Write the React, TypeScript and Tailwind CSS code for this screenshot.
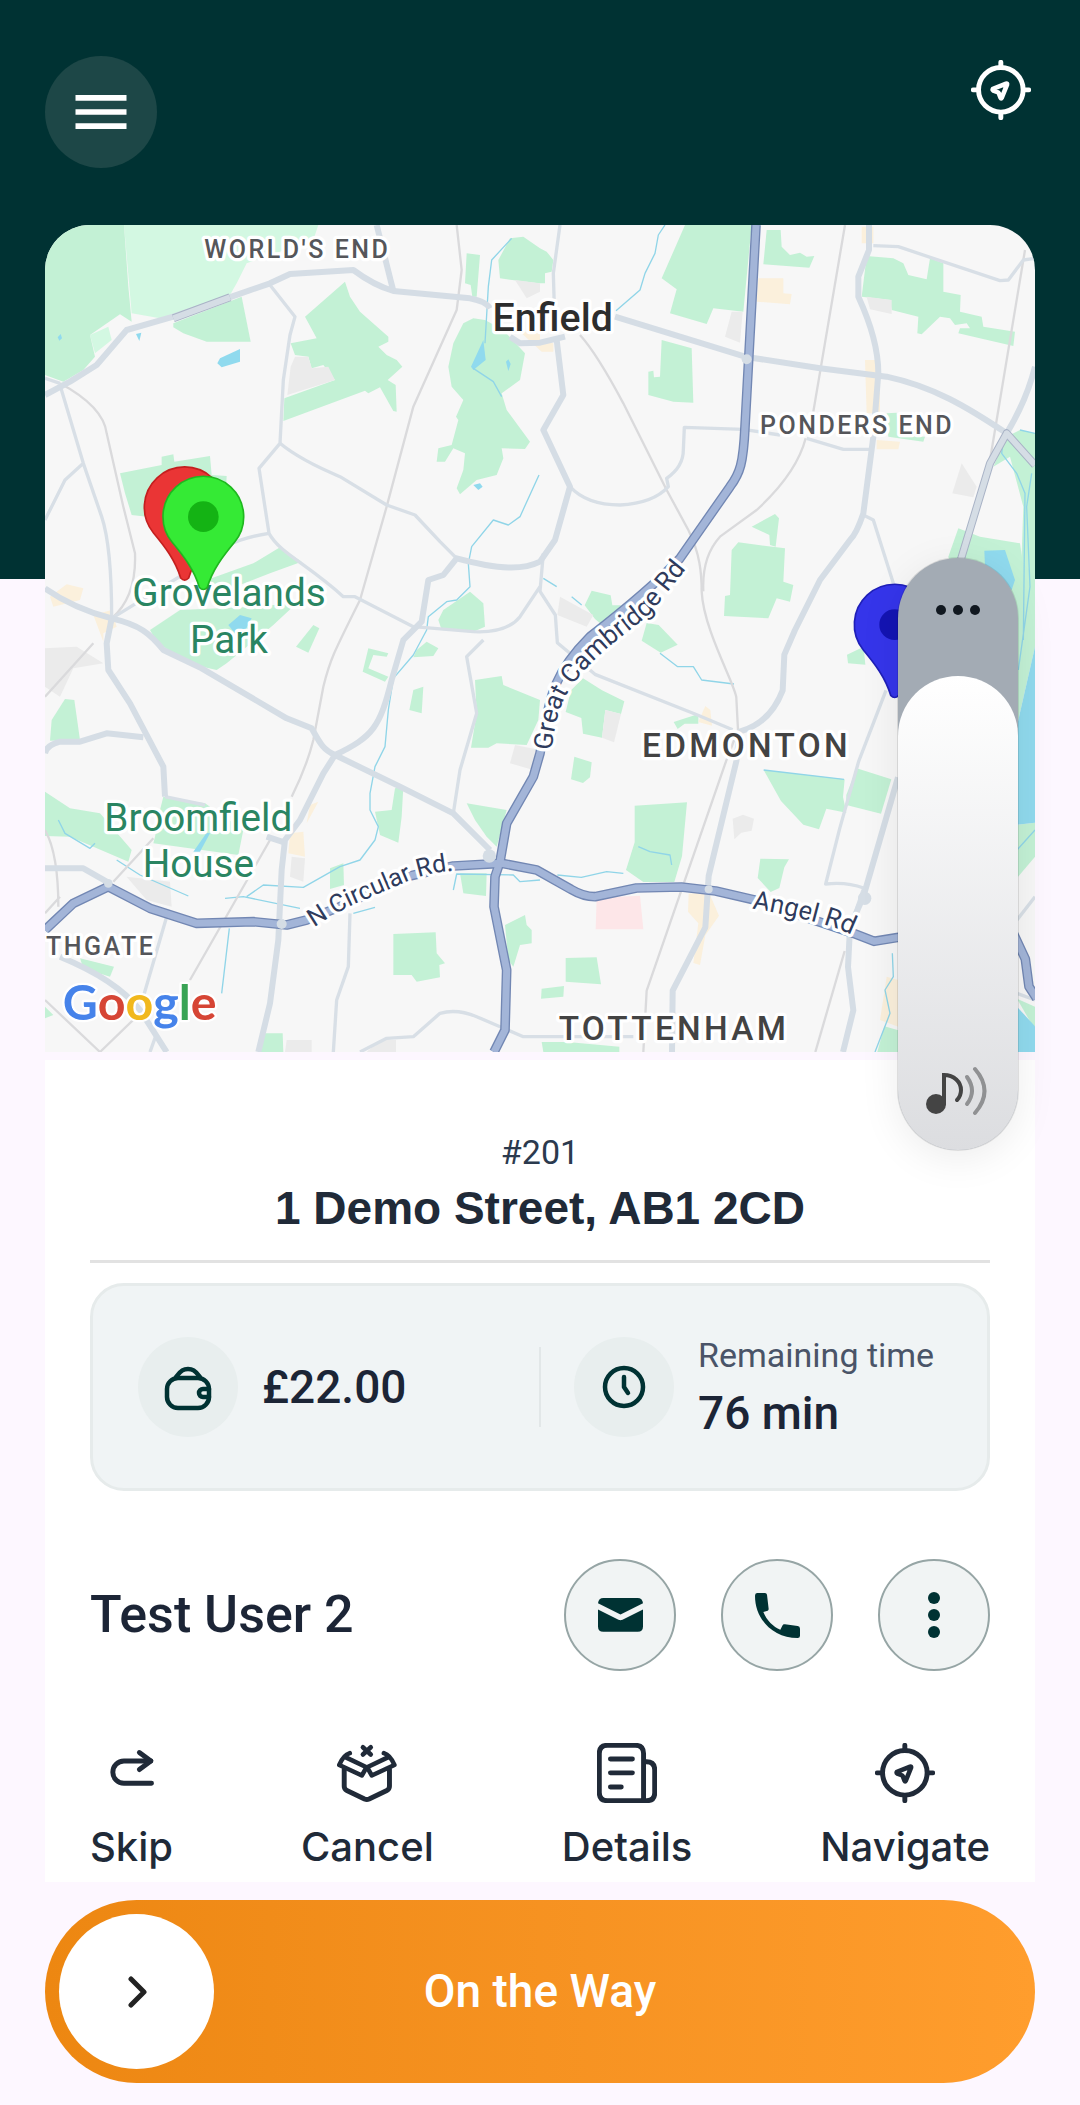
import { useState } from 'react'
import type { ReactNode } from 'react'
import { MdMenu } from 'react-icons/md'

const PARKS = [
  'M15 15H252L265 200 275 305 240 283 150 345 165 410 130 450 70 485 15 465Z',
  'M400 310L605 230 632 365 500 365 430 340 400 322Z',
  'M915 185L930 230 960 275 1045 350 1045 365 1015 380 1040 405 1070 420 1087 440 1043 480 1067 495 1070 575 1060 573 1020 502 985 520 975 512 730 603 733 535 885 480 850 435 815 445 805 410 765 405 752 370 830 355 795 290Z',
  'M1300 295L1335 300 1390 330 1455 400 1440 480 1385 520 1400 570 1470 665 1455 687 1385 685 1390 715 1370 765 1310 780 1260 823 1250 805 1270 750 1275 700 1240 685 1215 725 1190 725 1195 685 1235 675 1255 600 1248 590 1270 540 1235 500 1225 440 1240 370 1270 310Z',
  'M1280 100L1320 105 1310 230 1297 230 1292 195 1275 190Z',
  'M1375 120L1410 55 1450 50 1500 85 1520 95 1540 120 1535 155 1515 160 1515 190 1495 190 1380 175Z',
  'M1935 15H2135L2110 275 2020 265 2000 312 1890 280 1910 208 1865 175Z',
  'M2180 30H2222L2225 80 2250 105 2280 98 2300 110 2323 108 2308 143 2170 133Z',
  'M2480 108L2560 115 2590 130 2605 165 2660 178 2670 115 2710 130 2710 215 2762 225 2760 275 2825 290 2830 320 2925 335 2920 378 2800 350 2755 340 2760 325 2790 325 2780 310 2745 315 2730 295 2700 290 2645 343 2632 340 2635 290 2555 270 2550 240 2465 230Z',
  'M1865 360L1955 385 1960 548 1900 545 1825 525 1825 455 1840 452 1842 472 1860 470Z',
  'M2205 882L2217 895 2207 980 2190 975 2188 945 2135 920Z',
  'M2095 967L2235 985 2230 1085 2260 1095 2250 1145 2210 1135 2185 1195 2052 1188 2055 1128 2070 1125 2075 990Z',
  'M2540 580L2570 578 2575 645 2655 650 2650 665 2545 650Z',
  'M2755 925L2820 950 2940 970 2985 1280 2931 1517 2800 1260 2725 1010Z',
  'M2860 740L2900 650 2940 630 2985 640V1280H2935L2950 860 2910 710Z',
  'M1634 1156L1655 1112 1712 1126 1717 1156 1743 1156 1732 1185 1701 1227 1665 1197Z',
  'M1820 1209L1856 1215 1913 1274 1862 1298 1805 1262Z',
  'M1629 1375L1686 1411 1753 1444 1743 1482 1696 1470 1686 1553 1629 1541 1624 1494 1577 1476 1593 1411Z',
  'M1603 1610L1655 1627 1650 1672 1629 1689 1593 1678Z',
  'M1784 1757L1941 1747 1926 1909 1903 1986 1810 1986 1758 1950 1784 1867Z',
  'M2171 1650L2414 1678 2409 1731 2419 1778 2359 1766 2337 1828 2290 1814 2223 1743Z',
  'M2450 1645L2554 1678 2523 1781 2419 1755 2419 1725Z',
  'M2161 1916L2247 1918 2233 1942 2218 2004 2192 2016 2153 1974Z',
  'M1577 2214L1670 2212 1683 2293 1577 2285Z',
  'M1505 2306L1572 2298 1570 2330 1503 2336Z',
  'M1505 2466H1583L1738 2480V2496H1510Z',
  'M1901 1506L1975 1482V1511H1934L1913 1527Z',
  'M2421 1304L2471 1280 2476 1334 2424 1330Z',
  'M2533 2419L2575 2431V2496H2512Z',
  'M2931 1814L2985 1808V1910L2931 1974Z',
  'M2931 2336L2985 2360V2430Z',
  'M240 760L365 735V710L400 703 403 725 510 708 515 765 560 768 555 880 320 890 275 885 255 820Z',
  'M500 1080L640 1030 720 982 785 1025 690 1060 560 1110Z',
  'M330 1230L420 1170 640 1160 770 1150 700 1215 560 1330 530 1350 440 1330 350 1265Z',
  'M820 1215L838 1225 805 1298 768 1280Z',
  'M1195 1200L1210 1170 1290 1115 1330 1150 1335 1220 1300 1235 1205 1230Z',
  'M985 1285L1045 1300 1040 1310 1000 1305 985 1345 1045 1370 1035 1385 968 1355Z',
  'M1130 1290L1160 1265 1195 1285 1180 1308 1120 1312Z',
  'M1120 1410L1150 1400 1145 1480 1108 1470Z',
  'M1305 1380L1385 1368 1390 1395 1500 1440 1495 1500 1460 1575 1370 1570 1345 1583 1293 1583 1310 1480Z',
  'M75 1437L103 1440 120 1560 30 1562 35 1500Z',
  'M15 1715L90 1765 180 1780 275 1890 265 1925 90 1850 15 1848Z',
  'M370 1730L495 1750 610 1830 595 1905 340 1870 345 1850 360 1770Z',
  'M1280 1750L1400 1770 1370 1880 1340 1850 1305 1800Z',
  'M1065 1705L1090 1700 1085 1790 1075 1868 1020 1845 1005 1775 1055 1770Z',
  'M870 1945L910 1930 912 1995 870 2007Z',
  'M1260 1960H1340L1338 2028 1270 2020Z',
  'M1060 2142L1187 2137 1190 2200 1215 2230 1198 2235 1200 2272 1130 2285 1115 2265 1060 2265Z',
  'M1395 2115L1455 2085 1460 2115 1475 2130 1475 2170 1440 2175 1420 2240 1405 2220Z',
  'M665 2440H728L730 2496H655Z',
  'M120 2215L222 2240 210 2270 130 2245Z',
  'M15 2360L40 2385 15 2395Z',
]

const LIGHT_PARKS = ['M252 15H835L820 60 620 130 590 190 570 225 390 300 275 280Z', 'M150 345L205 320 215 360 165 400Z']

const BLOCKS = [
  'M765 410H805L815 445 865 440 885 480 742 525 752 440Z',
  'M1425 180L1500 190V215L1460 235Z',
  'M2075 275L2108 275 2100 368 2055 350Z',
  'M2480 230L2555 240 2555 282 2490 268Z',
  'M2765 730L2810 800 2800 832 2737 820Z',
  'M1560 1130L1660 1185 1640 1220 1552 1185Z',
  'M1696 1470L1743 1482 1722 1567 1686 1553Z',
  'M2078 1796L2109 1784 2142 1796 2135 1832 2104 1838 2083 1858Z',
  'M15 1285L110 1280 190 1330 100 1345 60 1430 15 1400Z',
  'M260 1970L390 1985 395 2060 320 2040Z',
  'M1425 1575L1500 1590 1480 1650 1410 1630Z',
  'M755 1910L795 1915 790 1985 750 1970Z',
  'M740 2460H815V2496H735Z',
  'M1020 2460H1068V2496H980Z',
]

const SHOPS = [
  'M2155 175H2230V220L2255 222 2250 253 2150 245Z',
  'M2465 20H2500V70H2465Z',
  'M2475 420H2520V580H2480Z',
  'M2510 660L2580 665 2575 688H2510Z',
  'M1440 335H1500V360L1540 370V395H1505Z',
  'M1946 2021L2006 2015 2037 2087 1996 2146 1980 2235 1960 2229 1975 2110 1944 2075Z',
  'M1996 1458L2011 1470 2016 1517 1975 1506Z',
  'M750 1840L790 1835 795 1910 745 1900Z',
  'M810 1755L835 1745 800 1810Z',
  'M30 1130L80 1093 130 1105 120 1140 40 1160Z',
  'M160 1185L215 1170 230 1220 190 1240 190 1265Z',
  'M2540 2270L2575 2280V2420L2520 2400Z',
]

const WATER = [
  'M540 415L600 387V425L545 442 532 430Z',
  'M288 342L304 338 298 363Z',
  'M53 352L62 342 66 355 58 362Z',
  'M1330 360L1337 420 1300 450 1293 440Z',
  'M1398 425L1405 418 1412 432 1405 453Z',
  'M1300 795L1320 790 1328 800 1315 810Z',
  'M565 1215L600 1185 635 1195 600 1260Z',
  'M500 1838L510 1840 480 1895 460 1895Z',
  'M2985 1280V1808L2931 1814V1517Z',
  'M2931 2360L2985 2419V2496H2931Z',
  'M2833 992L2895 990 2925 1080 2915 1110 2870 1060 2835 1040Z',
]

const STREAMS = [
  'M1415 55L1355 120 1345 200 1335 370M1300 445L1360 485 1385 530',
  'M1875 15L1855 45 1845 100 1815 160 1800 210 1728 272',
  'M1497 765L1440 890 1405 915 1360 900 1295 980 1285 1030 1290 1100 1250 1140 1220 1145 1165 1190 1160 1230 1120 1305 1060 1375 1045 1470 1035 1580 1005 1640 990 1720V1770L1015 1820 1005 1860 960 1920 900 1940 790 2002 670 1995 620 2030',
  'M55 1800L75 1840 150 1885 165 1870M230 1920L300 1965 445 2028',
  'M555 2035L610 2030 780 2065M568 2125L545 2320M940 2080L1005 2062',
  'M1240 2010L1250 1962 1420 1965 1440 1985 1500 1980',
  'M1510 1075L1550 1100M1595 1130L1625 1155M1860 1300L1913 1340 1960 1340 1985 1380 2082 1392',
  'M1552 1965L1624 1972 1700 1955 1750 1960M1795 1880L1830 1895 1890 1905 1895 1935',
  'M2171 1650L2412 1678',
  'M2940 630L2985 640M2890 660L2885 700 2930 760 2955 820 2950 1260M2975 760L2960 860 2970 1100 2935 1350',
  'M2985 1830L2931 1890M2557 2200L2560 2270 2535 2310 2550 2380 2505 2496',
]

const RAILS = [
  'M60 490Q190 560 200 640L250 860 285 1000Q290 1130 215 1195',
  'M1250 15L1265 150 1250 270 1120 560 1040 860 960 1140C880 1300 870 1320 850 1400L820 1560Q800 1640 755 1730M690 1860L450 2280',
  'M1620 345Q1670 400 1750 550L1880 810 1945 930C1980 1000 1985 1060 1985 1114 1990 1230 2089 1400 2089 1434L2094 1530 2058 1624 1820 2312 1810 2496',
  'M2415 15L2320 575M2297 655Q2270 760 2150 870L2040 950Q1985 1010 1990 1114',
  'M2955 90L2850 720',
  'M2414 2193L2326 2496',
  'M15 1430L160 1270M15 1830Q55 1900 55 2060M15 2080L60 2030M220 1985L340 1855M15 2340L180 2496 300 2380',
]

const MINOR_ROADS = [
  'M60 495L130 730 185 890Q215 980 215 1195M15 900L75 780 130 730M15 475L60 490',
  'M690 195L765 290 750 345 730 480 720 670 657 745 687 940C720 1000 800 1030 910 1130L945 1130 1120 1220 1300 1235Q1400 1240 1440 1190L1500 1100',
  'M720 670Q780 720 900 770L1040 855 1125 885 1200 965 1250 1015',
  'M687 940Q560 960 500 1020L215 1195',
  'M1560 15L1540 160 1545 330',
  'M1590 800Q1640 855 1740 855 1840 850 1885 800L1880 775Q1930 740 1930 690L1933 622 2110 628 2220 645M2300 655L2410 688H2495',
  'M2500 77L2575 80 2880 182 2905 180 2950 120 2985 115',
  'M2470 885L2500 900 2560 1090M2538 1411L2456 1624 2399 1826 2357 1992Q2420 1985 2471 2004L2430 2122',
  'M1510 1000L1500 1114 1546 1185 1552 1268 1665 1363 1965 1482 2078 1529',
  'M1330 1260L1280 1310 1310 1480 1260 1650 1240 1780',
  'M960 2496L1040 2455 1120 2450 1200 2380Q1250 2365 1310 2390L1450 2450H1780',
  'M930 2080L925 2240 890 2340 880 2496',
  'M380 2090L310 2330M350 2440L330 2496M375 1730L495 1755',
  'M2985 2030L2931 2100M2931 2320L2985 2340',
]

const ROADS = [
  'M15 525L90 485 170 435 260 330 400 290 560 235 690 190 750 162 940 150Q1000 195 1060 213L1290 235Q1340 245 1350 265M1410 350L1440 370 1500 368 1575 350',
  'M1010 15L1060 213',
  'M1725 290L2115 410 2340 445 2540 470C2680 500 2780 560 2900 640',
  'M2487 15V90L2455 170V230Q2515 360 2515 460L2500 650 2470 880Q2450 940 2430 960L2340 1080 2265 1230 2233 1304 2228 1411Q2190 1510 2099 1535L2089 1624 2006 1968 1996 2122 1898 2312 1896 2496',
  'M1550 360L1570 525 1510 630 1590 800 1545 960 1500 1025C1450 1050 1380 1050 1250 1015L1210 1065 1165 1080 1145 1205 1090 1260 1055 1380C1020 1520 1000 1550 885 1605L850 1660 780 1800 735 1860 725 1950 715 2160 690 2350 655 2496',
  'M15 1105Q100 1165 215 1195C300 1215 330 1240 370 1290L485 1345 740 1495 815 1525C840 1570 850 1590 885 1605L1080 1700 1240 1780 1350 1890',
  'M215 1195L200 1270 205 1350 270 1450 370 1640 375 1730',
  'M15 1600Q20 1575 60 1565L120 1565 200 1540 310 1552M15 1945H130L200 1985M680 1850L735 1868',
  'M60 2210Q230 2280 300 2370L380 2496',
  'M2985 440Q2960 540 2900 640M2574 1672L2471 2027 2430 2122 2424 2241 2440 2371 2409 2496',
]

const CASED_ROADS = ['M2985 735L2900 640 2850 730 2750 1060', 'M400 295L570 232']

const HIGHWAYS = [
  'M2148 15L2115 620C2110 730 2100 760 2070 800L1920 1015Q1830 1110 1650 1250C1530 1370 1530 1440 1500 1600L1480 1670 1400 1810 1380 1925 1365 1970 1362 2060 1400 2250 1395 2430 1362 2496',
  'M15 2130L100 2050 205 2000 330 2065 470 2110 640 2105 740 2115 800 2100 900 2060 1100 1970 1240 1938 1385 1930 1490 1950 1593 2008Q1630 2030 1665 2030L1789 2004 1924 2001 2027 2013 2140 2039 2440 2140 2502 2164 2576 2152',
  'M2920 2140L2956 2217 2967 2300 2990 2335',
]

const PIN_SHAPE = 'M-12 212C-28 158-60 117-94 76A121 121 0 1 1 94 76C60 117 28 158 12 212Q0 225-12 212Z'

function Pin({ x, y, fill, edge, dot }: { x: number; y: number; fill: string; edge: string; dot: string }) {
  return (
    <g transform={`translate(${x} ${y})`}>
      <path d={PIN_SHAPE} fill={fill} stroke={edge} strokeWidth={5} />
      <circle r={46} fill={dot} />
    </g>
  )
}

function LayerPaths({ paths, stroke, width }: { paths: string[]; stroke: string; width: number }) {
  return (
    <g fill="none" stroke={stroke} strokeWidth={width} strokeLinejoin="round">
      {paths.map((d) => <path key={d} d={d} />)}
    </g>
  )
}

function AreaPaths({ paths, fill }: { paths: string[]; fill: string }) {
  return (
    <g fill={fill}>
      {paths.map((d) => <path key={d} d={d} />)}
    </g>
  )
}

function RouteMap() {
  return (
    <svg viewBox="15 15 2970 2481" className="block w-full rounded-t-[45px] font-['Roboto',sans-serif]" role="img" aria-label="Route map">
      <rect x={15} y={15} width={2970} height={2481} fill="#f7f7f7" />
      <AreaPaths paths={LIGHT_PARKS} fill="#d3f8e2" />
      <AreaPaths paths={PARKS} fill="#c3f1d5" />
      <AreaPaths paths={BLOCKS} fill="#ebebeb" />
      <AreaPaths paths={SHOPS} fill="#fbf0dc" />
      <path d="M1670 2033L1800 2027 1810 2128H1667Z" fill="#fde6e8" />
      <AreaPaths paths={WATER} fill="#90daee" />
      <LayerPaths paths={STREAMS} stroke="#90d5e8" width={4} />
      <LayerPaths paths={RAILS} stroke="#dadadc" width={7} />
      <LayerPaths paths={MINOR_ROADS} stroke="#d8dfe6" width={10} />
      <LayerPaths paths={ROADS} stroke="#d5dde5" width={18} />
      <LayerPaths paths={CASED_ROADS} stroke="#a9b3c6" width={24} />
      <LayerPaths paths={CASED_ROADS} stroke="#d5dde5" width={18} />
      <LayerPaths paths={HIGHWAYS} stroke="#7287b3" width={29} />
      <LayerPaths paths={HIGHWAYS} stroke="#a3b5d8" width={21} />
      <g fill="#d5dde5">
        <circle cx={2120} cy={418} r={15} />
        <circle cx={205} cy={1990} r={13} />
        <circle cx={725} cy={2112} r={15} />
        <circle cx={2006} cy={2008} r={12} />
        <circle cx={1348} cy={1908} r={20} />
        <circle cx={2474} cy={2035} r={20} />
      </g>

      <defs>
        <path id="great-cambridge" d="M1536 1592Q1545 1460 1605 1385T1758 1239 1851 1156L1960 1020" />
        <path id="n-circular" d="M822 2122Q900 2070 960 2045T1100 1985 1290 1950" />
        <path id="angel" d="M2136 2066Q2230 2080 2340 2110T2470 2175" />
      </defs>
      <g stroke="#fff" strokeWidth={20} strokeLinejoin="round" className="[paint-order:stroke]">
        <g fill="#2f3b5c" fontSize={78}>
          <text><textPath href="#great-cambridge">Great Cambridge Rd</textPath></text>
          <text fontSize={75}><textPath href="#n-circular">N Circular Rd.</textPath></text>
          <text><textPath href="#angel">Angel Rd</textPath></text>
        </g>
        <g fill="#55565a" fontSize={75} className="font-medium tracking-widest">
          <text x={493} y={114}>WORLD'S END</text>
          <text x={2160} y={642}>PONDERS END</text>
          <text x={18} y={2205}>THGATE</text>
        </g>
        <g fill="#434343" fontSize={100} className="font-medium tracking-widest">
          <text x={1806} y={1612}>EDMONTON</text>
          <text x={1556} y={2460}>TOTTENHAM</text>
        </g>
        <text x={1538} y={332} fill="#2d2d2d" fontSize={118} textAnchor="middle" className="font-medium">Enfield</text>
        <g fill="#2a8562" fontSize={116} textAnchor="middle">
          <text x={475} y={1832}>Broomfield</text>
          <text x={475} y={1972}>House</text>
          <text x={567} y={1158}>Grovelands</text>
          <text x={567} y={1298}>Park</text>
        </g>
      </g>

      <Pin x={434} y={862} fill="#ea3535" edge="#c41f1f" dot="#b31414" />
      <Pin x={490} y={890} fill="#35ea35" edge="#1fb81f" dot="#14b314" />
      <Pin x={2564} y={1214} fill="#3535ea" edge="#1f1fb8" dot="#1414b3" />

      <text x={68} y={2399} fontSize={145} stroke="#fff" strokeWidth={14} strokeLinejoin="round" className="font-['Lato',sans-serif] font-bold [paint-order:stroke]">
        <tspan fill="#4683ea">G</tspan>
        <tspan fill="#d64535">o</tspan>
        <tspan fill="#f1b81d">o</tspan>
        <tspan fill="#4683ea">g</tspan>
        <tspan fill="#3aa456">l</tspan>
        <tspan fill="#d64535">e</tspan>
      </text>
    </svg>
  )
}

function LineIcon({ children }: { children: ReactNode }) {
  return (
    <svg viewBox="0 0 183 183" fill="none" stroke="currentColor" strokeWidth={15} strokeLinecap="round" strokeLinejoin="round" className="size-15" aria-hidden="true">
      {children}
    </svg>
  )
}

function NavigateIcon() {
  return (
    <LineIcon>
      <circle cx={91} cy={91} r={68} />
      <path d="M91 7V22M91 160V176M7 91H22M160 91H176" />
      <path strokeWidth={14} d="M67 88Q65 91 68 93L81 98Q84 99 85 102L90 115Q92 119 94 115L110 75Q111 71 107 72Z" />
    </LineIcon>
  )
}

function SkipIcon() {
  return (
    <LineIcon>
      <path d="M149 55H67A34 34 0 0 0 67 123H151" />
      <path d="M114 29L149 55 114 81" />
    </LineIcon>
  )
}

function CancelIcon() {
  return (
    <LineIcon>
      <path strokeWidth={14} d="M79 13L103 35M103 13L79 35" />
      <path d="M22 80V132Q22 141 30 145L84 171Q91 174 98 171L152 145Q160 141 160 132V80" />
      <path strokeWidth={14} d="M39 31C23 36 14 50 7 67L76 99 90 74 27 44" />
      <path strokeWidth={14} d="M143 31C159 36 168 50 175 67L106 99 92 74 155 44" />
    </LineIcon>
  )
}

function DetailsIcon() {
  return (
    <LineIcon>
      <path d="M142 176V32Q142 7 117 7H32Q7 7 7 32V151Q7 176 32 176H152Q176 176 176 152V82Q176 57 151 57H144" />
      <path d="M41 49H108M41 91H108M41 134H74" />
    </LineIcon>
  )
}

const actions = [
  { label: 'Skip', icon: <SkipIcon /> },
  { label: 'Cancel', icon: <CancelIcon /> },
  { label: 'Details', icon: <DetailsIcon /> },
  { label: 'Navigate', icon: <NavigateIcon /> },
]

function RoundButton({ label, children }: { label: string; children: ReactNode }) {
  return (
    <button aria-label={label} className="flex size-28 items-center justify-center rounded-full border-2 border-[#96a5a5] bg-[#f1f4f4] text-[#003233]">
      {children}
    </button>
  )
}

function VolumePanel() {
  const [volume, setVolume] = useState(80)

  return (
    <div className="absolute top-[558px] right-[62px] flex h-[592px] w-30 flex-col overflow-hidden rounded-full bg-[#a3abb4] shadow-[0_8px_40px_rgba(0,0,0,0.08)] ring-1 ring-black/10">
      <button aria-label="More sound settings" className="flex h-[118px] items-center justify-center gap-[7px] pb-[14px]">
        <span className="size-[10px] rounded-full bg-[#111820]" />
        <span className="size-[10px] rounded-full bg-[#111820]" />
        <span className="size-[10px] rounded-full bg-[#111820]" />
      </button>
      <div className="relative flex flex-1 items-end justify-center rounded-t-full bg-gradient-to-b from-white to-[#dcdde0] pb-8">
        <input
          type="range"
          aria-label="Media volume"
          value={volume}
          onChange={(e) => setVolume(Number(e.target.value))}
          className="absolute inset-0 h-full w-full opacity-0"
        />
        <svg viewBox="0 0 64 52" fill="none" strokeWidth={4} strokeLinecap="round" className="h-13 w-16" aria-hidden="true">
          <circle cx={10} cy={38} r={10} fill="#444" />
          <path d="M18 38V9C28 9 35 16 35 24Q35 30 31 34" stroke="#444" />
          <path d="M41 11Q51 25 41 38" stroke="#909193" />
          <path d="M49 3Q68 25 49 47" stroke="#909193" />
        </svg>
      </div>
    </div>
  )
}

export default function App() {
  return (
    <div className="relative min-h-screen bg-[linear-gradient(#003233_579px,#fdf7ff_579px)] px-[45px] pb-5 font-['Roboto',sans-serif] text-[#1c2536]">
      {/* Top bar */}
      <header className="flex items-start justify-between pt-14 pb-[57px] text-white">
        <button aria-label="Open menu" className="flex size-28 items-center justify-center rounded-full bg-[#1d4747]">
          <MdMenu size={68} />
        </button>
        <button aria-label="Navigate" className="p-1">
          <NavigateIcon />
        </button>
      </header>

      <RouteMap />

      {/* Job details */}
      <main className="mt-2 bg-white px-[45px] pt-18 pb-[11px]">
        <p className="text-center text-[34px] leading-10 text-[#2b3a4e]">#201</p>
        <h1 className="mt-2 text-center font-['Liberation_Sans',sans-serif] text-[46px] leading-14 font-bold text-[#202a38]">
          1 Demo Street, AB1 2CD
        </h1>
        <hr className="mt-6 border-t-3 border-[#e2e2e2]" />

        <section className="mt-5 grid h-52 grid-cols-[1fr_auto_1fr] items-center rounded-[34px] border-3 border-[#e6ebeb] bg-[#f0f4f5] px-[45px]">
          <div className="flex items-center gap-6">
            <span className="flex size-25 items-center justify-center rounded-full bg-[#e8eeee] text-[#003233]">
              <svg viewBox="0 0 48 54" fill="none" stroke="currentColor" strokeWidth={4.5} strokeLinecap="round" strokeLinejoin="round" className="w-12" aria-hidden="true">
                <rect x={3} y={18} width={42} height={30} rx={11} />
                <path d="M12 17C17 10 20 9 24 9S31 10 36 17" />
                <path d="M45 29H39A4 4 0 0 0 39 37H45" />
              </svg>
            </span>
            <span className="text-[46px] leading-14 font-medium">£22.00</span>
          </div>
          <div className="h-20 w-[2px] bg-[#e2e7e8]" />
          <div className="flex items-center gap-6 pl-[33px]">
            <span className="flex size-25 shrink-0 items-center justify-center rounded-full bg-[#e8eeee] text-[#003233]">
              <svg viewBox="0 0 44 44" fill="none" stroke="currentColor" strokeWidth={4.5} strokeLinecap="round" strokeLinejoin="round" className="w-11" aria-hidden="true">
                <circle cx={22} cy={22} r={19} />
                <path d="M22 12V22L26 28" />
              </svg>
            </span>
            <div className="whitespace-nowrap">
              <p className="text-[34px] leading-11 text-[#4a5468]">Remaining time</p>
              <p className="mt-2 text-[46px] leading-14 font-medium">76 min</p>
            </div>
          </div>
        </section>

        <section className="mt-17 flex items-center justify-between">
          <h2 className="text-[52px] leading-16 font-medium">Test User 2</h2>
          <div className="flex gap-[45px]">
            <RoundButton label="Message">
              <svg viewBox="0 0 136 102" fill="currentColor" className="w-[45px]" aria-hidden="true">
                <path d="M0 16Q2 0 16 0H120Q134 0 136 16L68 50Z" />
                <path d="M0 35L62 66Q68 69 74 66L136 35V86Q136 102 120 102H16Q0 102 0 86Z" />
              </svg>
            </RoundButton>
            <RoundButton label="Call">
              <svg viewBox="0 0 135 135" fill="currentColor" className="w-[45px]" aria-hidden="true">
                <path d="M6 0H30Q35 0 36 5L41 48Q41 52 38 53L25 57C35 82 55 102 76 110L82 98Q84 93 90 94L128 99Q135 100 135 107V128Q135 135 128 135C55 135 0 80 0 8Q0 0 6 0Z" />
              </svg>
            </RoundButton>
            <RoundButton label="More">
              <svg viewBox="0 0 12 46" fill="currentColor" className="w-3" aria-hidden="true">
                <circle cx={6} cy={6} r={6} />
                <circle cx={6} cy={23} r={6} />
                <circle cx={6} cy={40} r={6} />
              </svg>
            </RoundButton>
          </div>
        </section>

        <nav className="mt-18 flex justify-between">
          {actions.map((action) => (
            <button key={action.label} className="flex flex-col items-center gap-5 text-[#202a38]">
              {action.icon}
              <span className="font-['Inter',sans-serif] text-[40px] leading-12 font-medium">{action.label}</span>
            </button>
          ))}
        </nav>
      </main>

      {/* Slide to confirm */}
      <button className="mt-[18px] flex w-full items-center justify-center rounded-full bg-gradient-to-r from-[#ed8711] to-[#ff9d2d] p-[14px] text-white">
        <span className="flex size-[155px] items-center justify-center rounded-full bg-white text-[#222]">
          <svg viewBox="0 0 20 34" fill="none" stroke="currentColor" strokeWidth={5} strokeLinecap="round" strokeLinejoin="round" className="w-5" aria-hidden="true">
            <path d="M4 4L17 17 4 30" />
          </svg>
        </span>
        <span className="mr-[155px] flex-1 text-center text-[46px] font-medium">On the Way</span>
      </button>

      <VolumePanel />
    </div>
  )
}
